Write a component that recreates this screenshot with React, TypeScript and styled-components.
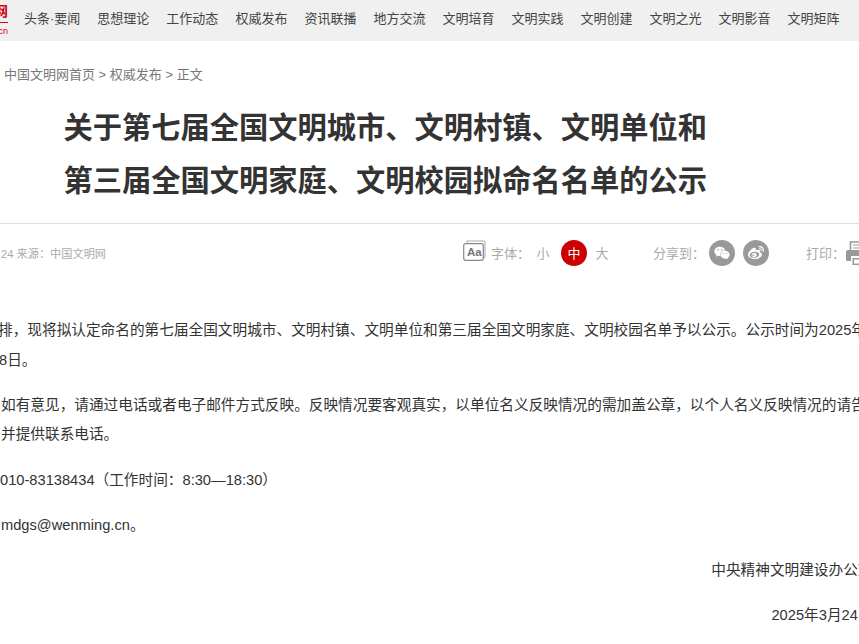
import React from 'react'
import styled, { createGlobalStyle } from 'styled-components'
import { FaWeixin, FaWeibo } from 'react-icons/fa'

const cjk = `"Noto Sans CJK SC", "Noto Sans", sans-serif`

const GlobalStyle = createGlobalStyle`
    html, body {
        margin: 0;
        padding: 0;
        height: 100%;
        overflow: hidden;
        background: #fff;
    }
    body {
        font-family: "Liberation Sans", ${cjk};
    }
`

const Page = styled.div`
    width: 859px;
    height: 644px;
    overflow: hidden;
`

const NavBar = styled.nav`
    display: flex;
    align-items: center;
    height: 41px;
    background: #f0f0f0;
`

const Logo = styled.div`
    width: 8px;
    height: 41px;
    margin-right: 16px;
    overflow: hidden;
    display: flex;
    flex-direction: column;
    align-items: flex-end;
    color: #d7000f;
    flex-shrink: 0;
`

const LogoMark = styled.span`
    font-size: 14px;
    font-weight: 700;
    line-height: 14px;
    margin-top: 3px;
    white-space: nowrap;
    height: 14px;
    font-family: ${cjk};
    border-bottom: 1px solid #d7000f;
    padding-bottom: 5px;
`

const LogoCn = styled.span`
    font-size: 9px;
    line-height: 11px;
    margin-top: 3px;
`

const NavItem = styled.a`
    font-size: 13px;
    line-height: 38px;
    padding-bottom: 3px;
    color: #444;
    margin-right: 17px;
    white-space: nowrap;
    flex-shrink: 0;
`

const Crumbs = styled.div`
    font-size: 13px;
    line-height: 20px;
    color: #777;
    margin: 24px 0 0 4px;
`

const Title = styled.h1`
    margin: 14px 0 0 63.5px;
    font-size: 29.25px;
    line-height: 53px;
    font-weight: 700;
    color: #333;
    white-space: nowrap;
    font-family: ${cjk};
`

const MetaRow = styled.div`
    display: flex;
    align-items: center;
    height: 58px;
    margin-top: 18px;
    border-top: 1px solid #ddd;
    white-space: nowrap;
    width: 900px;
`

const Source = styled.span`
    font-size: 11.2px;
    color: #aaa;
    width: 463px;
    padding-left: 1px;
    box-sizing: border-box;
`

const ToolLabel = styled.span<{ $gap?: number }>`
    font-size: 13px;
    color: #aaa;
    margin: 0 ${(props) => props.$gap ?? 0}px 2px 0;
`

const SizeOption = styled.span<{ $active?: boolean }>`
    width: 26px;
    height: 26px;
    box-sizing: border-box;
    padding-bottom: 2px;
    border-radius: 50%;
    display: flex;
    align-items: center;
    justify-content: center;
    font-size: 13px;
    margin: ${(props) => (props.$active ? '0 2px 0 5px' : '0')};
    color: ${(props) => (props.$active ? '#fff' : '#aaa')};
    background: ${(props) => (props.$active ? '#cc0000' : 'transparent')};
`

const ToolGroup = styled.div<{ $width: number }>`
    display: flex;
    align-items: center;
    width: ${(props) => props.$width}px;
    flex-shrink: 0;
`

const RoundIcons = styled.div`
    display: flex;
    gap: 8px;
`

const RoundIcon = styled.span`
    width: 26px;
    height: 26px;
    border-radius: 50%;
    background: #999;
    color: #fff;
    display: flex;
    align-items: center;
    justify-content: center;
    font-size: 16px;
`

const FontGlyph = styled.svg`
    margin: 0 4px 5px 0;
`

const Article = styled.article`
    font-size: 14.667px;
    line-height: 29.6px;
    color: #333;
    margin-top: 34px;
    white-space: nowrap;
`

const Para = styled.p`
    margin: 0 0 15.6px;
`

const Line = styled.span<{ $x: number }>`
    display: block;
    margin-left: ${(props) => props.$x}px;
`

const Sign = styled.p`
    margin: 0 0 15.6px;
    width: 872.5px;
    text-align: right;
`

const navItems = [
    '头条·要闻',
    '思想理论',
    '工作动态',
    '权威发布',
    '资讯联播',
    '地方交流',
    '文明培育',
    '文明实践',
    '文明创建',
    '文明之光',
    '文明影音',
    '文明矩阵',
]

const FontIcon = () => (
    <FontGlyph width="24" height="22" viewBox="0 0 24 22" fill="none">
        <path d="M4 3.5V1h17a1 1 0 0 1 1 1v15.5h-2" stroke="#aaa" strokeWidth="1" />
        <rect x="0.7" y="3.7" width="19.6" height="16.6" rx="2" stroke="#888" strokeWidth="1.2" fill="#fff" />
        <text x="4" y="16" fontSize="11.5" fontWeight="700" fill="#777" fontFamily="Liberation Sans">
            Aa
        </text>
    </FontGlyph>
)

const PrintIcon = () => (
    <svg width="24" height="24" viewBox="0 0 24 24" fill="none">
        <path d="M4.500 9V1h11l4 4v4" stroke="#999" strokeWidth="1.6" />
        <path d="M7 4h8M7 7h10" stroke="#999" strokeWidth="1.2" />
        <path
            d="M2 9h20a2 2 0 0 1 2 2v8a1 1 0 0 1-1 1h-4v-5H5v5H1a1 1 0 0 1-1-1v-8a2 2 0 0 1 2-2z"
            fill="#999"
        />
        <path d="M6.500 17h11v7h-11z" fill="#999" />
        <path d="M8 18.500h8v4H8z" fill="#fff" />
    </svg>
)

export default function App() {
    return (
        <Page>
            <GlobalStyle />
            <NavBar>
                <Logo>
                    <LogoMark>网</LogoMark>
                    <LogoCn>cn</LogoCn>
                </Logo>
                {navItems.map((item) => (
                    <NavItem key={item}>{item}</NavItem>
                ))}
            </NavBar>
            <Crumbs>中国文明网首页 &gt; 权威发布 &gt; 正文</Crumbs>
            <Title>
                关于第七届全国文明城市、文明村镇、文明单位和
                <br />
                第三届全国文明家庭、文明校园拟命名名单的公示
            </Title>
            <MetaRow>
                <Source>24 来源：中国文明网</Source>
                <ToolGroup $width={190}>
                    <FontIcon />
                    <ToolLabel>字体：</ToolLabel>
                    <SizeOption>小</SizeOption>
                    <SizeOption $active>中</SizeOption>
                    <SizeOption>大</SizeOption>
                </ToolGroup>
                <ToolGroup $width={153}>
                    <ToolLabel $gap={4}>分享到：</ToolLabel>
                    <RoundIcons>
                        <RoundIcon>
                            <FaWeixin />
                        </RoundIcon>
                        <RoundIcon>
                            <FaWeibo />
                        </RoundIcon>
                    </RoundIcons>
                </ToolGroup>
                <ToolGroup $width={80}>
                    <ToolLabel $gap={1}>打印：</ToolLabel>
                    <PrintIcon />
                </ToolGroup>
            </MetaRow>
            <Article>
                <Para>
                    <Line $x={-2}>
                        排，现将拟认定命名的第七届全国文明城市、文明村镇、文明单位和第三届全国文明家庭、文明校园名单予以公示。公示时间为2025年
                    </Line>
                    <Line $x={-1}>8日。</Line>
                </Para>
                <Para>
                    <Line $x={1}>
                        如有意见，请通过电话或者电子邮件方式反映。反映情况要客观真实，以单位名义反映情况的需加盖公章，以个人名义反映情况的请告知
                    </Line>
                    <Line $x={1}>并提供联系电话。</Line>
                </Para>
                <Para>
                    <Line $x={0}>010-83138434（工作时间：8:30—18:30）</Line>
                </Para>
                <Para>
                    <Line $x={1}>mdgs@wenming.cn。</Line>
                </Para>
                <Sign>中央精神文明建设办公室</Sign>
                <Sign>2025年3月24日</Sign>
            </Article>
        </Page>
    )
}
